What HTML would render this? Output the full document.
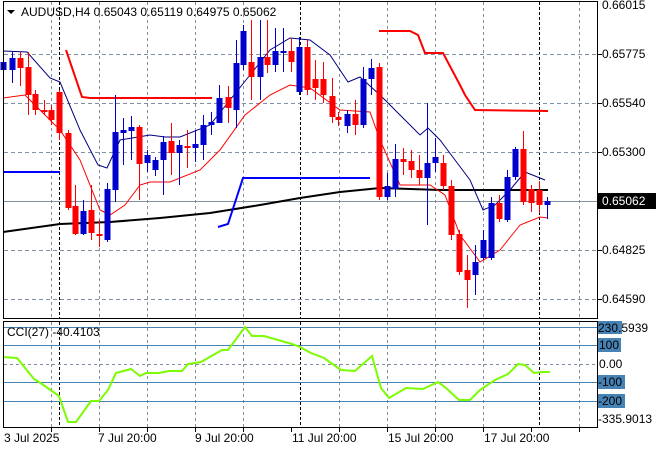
<!DOCTYPE html>
<html><head><meta charset="utf-8"><style>
body{margin:0;background:#fff;width:660px;height:450px;overflow:hidden}
svg{display:block;font-family:"Liberation Sans",Tahoma,sans-serif}
</style></head><body>
<svg id="s" width="660" height="450" xmlns="http://www.w3.org/2000/svg">
<rect width="660" height="450" fill="#fff"/>
<g id="grid"></g>
<g id="lines"></g>
<g id="candles"></g>
<rect x="3.5" y="1.5" width="594" height="317" fill="none" stroke="#000"/>
<rect x="3.5" y="321.5" width="594" height="106" fill="none" stroke="#000"/>
<g font-size="12" fill="#000">
<text x="602" y="9">0.66015</text>
<text x="602" y="58">0.65775</text>
<text x="602" y="107">0.65540</text>
<text x="602" y="156">0.65300</text>
<rect x="598" y="193" width="58" height="16" fill="#000"/>
<text x="602" y="205" fill="#fff">0.65062</text>
<text x="602" y="254">0.64825</text>
<text x="602" y="303">0.64590</text>
<rect x="598" y="321" width="24" height="13" fill="#4682b4"/>
<text x="598" y="332">230.5939</text>
<rect x="598" y="338" width="23" height="14" fill="#4682b4"/>
<text x="599" y="349">100</text>
<text x="599" y="368">0.00</text>
<rect x="598" y="375" width="27" height="14" fill="#4682b4"/>
<text x="598" y="386">-100</text>
<rect x="598" y="394" width="27" height="14" fill="#4682b4"/>
<text x="598" y="405">-200</text>
<text x="598" y="423">-335.9013</text>
<text x="4" y="442">3 Jul 2025</text>
<text x="98" y="442">7 Jul 20:00</text>
<text x="195" y="442">9 Jul 20:00</text>
<text x="292" y="442">11 Jul 20:00</text>
<text x="388" y="442">15 Jul 20:00</text>
<text x="484" y="442">17 Jul 20:00</text>
<path d="M7 10 L15 10 L11 14 Z" fill="#000"/>
<text x="21" y="16" font-size="12">AUDUSD,H4  0.65043 0.65119 0.64975 0.65062</text>
<text x="7" y="336">CCI(27) -40.4103</text>
</g>
</svg>
<script>
var NS="http://www.w3.org/2000/svg";
function el(p,t,a){var e=document.createElementNS(NS,t);for(var k in a)e.setAttribute(k,a[k]);document.getElementById(p).appendChild(e);return e;}
var vx=[51,99,147,195,243,339,387,435,483,579];
vx.forEach(function(x){el("grid","line",{x1:x+.5,y1:2,x2:x+.5,y2:318,stroke:"#8090a0","stroke-dasharray":"3,3"});el("grid","line",{x1:x+.5,y1:322,x2:x+.5,y2:427,stroke:"#8090a0","stroke-dasharray":"3,3"});});
[59,300,539].forEach(function(x){el("grid","line",{x1:x+.5,y1:2,x2:x+.5,y2:318,stroke:"#000","stroke-dasharray":"3,2"});el("grid","line",{x1:x+.5,y1:322,x2:x+.5,y2:427,stroke:"#000","stroke-dasharray":"3,2"});});
[54,103,152,250,299].forEach(function(y){el("grid","line",{x1:4,y1:y+.5,x2:597,y2:y+.5,stroke:"#8090a0","stroke-dasharray":"4,3"});el("grid","line",{x1:597,y1:y+.5,x2:602,y2:y+.5,stroke:"#000"});});
el("grid","line",{x1:4,y1:201.5,x2:597,y2:201.5,stroke:"#8090a0"});
[327,345,382,401].forEach(function(y){el("grid","line",{x1:4,y1:y+.5,x2:597,y2:y+.5,stroke:"#4682b4"});});
el("grid","line",{x1:4,y1:364.5,x2:597,y2:364.5,stroke:"#8090a0","stroke-dasharray":"3,3"});
[51,99,147,195,243,291,339,387,435,483,531,579].forEach(function(x){el("grid","line",{x1:x+.5,y1:428,x2:x+.5,y2:432,stroke:"#000"});});
function pl(pts,c,w){el("lines","polyline",{points:pts,fill:"none",stroke:c,"stroke-width":w});}
pl("3,232 60,224 110,222 160,218 210,213 260,205 300,198 340,192 380,188 440,190 470,190 548,190","#000",2);
pl("3,51 27,52 50,78 60,82 80,130 98,165 107,168 120,140 150,135 165,137 180,137 210,125 230,100 250,75 270,50 290,38 310,40 330,55 348,82 360,77 380,95 400,115 420,135 428,128 440,140 455,160 470,180 483,210 495,205 510,190 525,172 545,180","#000080",1);
pl("3,98 25,95 40,110 60,130 80,160 100,210 110,215 125,205 140,185 150,182 170,182 200,170 220,150 245,115 270,95 290,85 310,88 340,110 370,112 380,140 400,185 430,185 445,195 460,235 480,262 500,250 520,225 540,217 548,218","#f00",1);
pl("66,50 82,97 90,98 212,98","#f00",2);
pl("379,31 410,31 418,35 425,53 443,53 452,70 460,85 465,95 475,110 548,111","#f00",2);
pl("3,172 60,172","#00f",2);
pl("218,227 228,224 243,178 370,178","#00f",2);
pl("3,357 17,358 34,379 42,384 59,396 68,422 76,422 91,401 99,401 108,390 116,373 131,369 140,376 146,373 159,373 169,371 182,371 188,364 201,362 222,350 228,350 245,327 252,336 264,336 292,344 300,347 311,353 324,358 341,370 355,371 372,356 381,388 389,398 406,388 423,389 438,382 446,388 459,400 470,400 480,390 495,380 508,374 518,364 525,365 534,373 542,372 550,372","#7cfc00",2);
var C=[[3,62,70,52,83,1],[12,58,70,52,83,1],[20,58,68,52,86,0],[28,67,95,52,115,0],[35,94,110,90,115,0],[44,110,112,100,115,0],[51,110,120,105,125,0],[59,92,133,90,140,0],[68,133,208,130,210,0],[75,206,234,185,235,0],[83,211,234,200,235,1],[91,210,233,185,240,0],[99,234,236,220,247,0],[107,189,240,183,242,1],[115,132,190,95,202,1],[123,130,133,118,165,1],[131,127,131,116,160,1],[139,127,164,125,200,0],[147,155,163,150,172,1],[155,160,170,157,176,1],[163,142,160,136,195,1],[171,141,153,123,175,0],[179,145,153,140,185,1],[187,146,148,130,168,0],[195,144,148,130,162,1],[203,125,145,115,160,1],[211,122,125,112,135,1],[219,98,123,85,123,1],[228,97,108,86,123,0],[236,63,110,40,128,1],[243,31,65,25,70,1],[251,62,77,20,100,0],[260,57,77,20,100,1],[267,57,65,20,73,0],[275,51,65,28,72,1],[283,51,53,28,72,1],[291,51,62,38,72,0],[299,47,92,37,95,1],[307,47,90,40,95,0],[315,79,88,60,100,0],[323,79,95,62,103,0],[332,96,117,78,123,0],[338,117,120,112,126,0],[347,114,126,110,133,1],[355,114,125,100,135,0],[363,79,125,67,128,1],[371,68,79,59,95,1],[379,67,197,63,200,0],[387,186,197,173,200,1],[395,159,189,144,197,1],[403,159,162,148,175,0],[411,161,170,150,178,0],[419,170,178,155,185,0],[427,163,178,103,225,1],[435,157,163,138,172,1],[443,163,186,155,190,0],[451,186,235,180,240,0],[459,234,272,230,275,0],[467,270,280,255,308,0],[475,262,275,245,295,1],[483,240,258,230,260,1],[491,203,258,197,260,1],[499,203,219,195,222,0],[507,177,220,170,222,1],[515,149,177,147,180,1],[523,149,202,131,205,0],[531,189,203,185,212,0],[539,190,205,181,213,0],[547,201,205,197,219,1]];
C.forEach(function(c){var col=c[5]?"#00c":"#f00";var x=c[0];
el("candles","line",{x1:x+.5,y1:c[3],x2:x+.5,y2:c[4],stroke:col});
el("candles","rect",{x:x-2.5,y:c[1],width:6,height:Math.max(1,c[2]-c[1]),fill:col});});
</script>
</body></html>
